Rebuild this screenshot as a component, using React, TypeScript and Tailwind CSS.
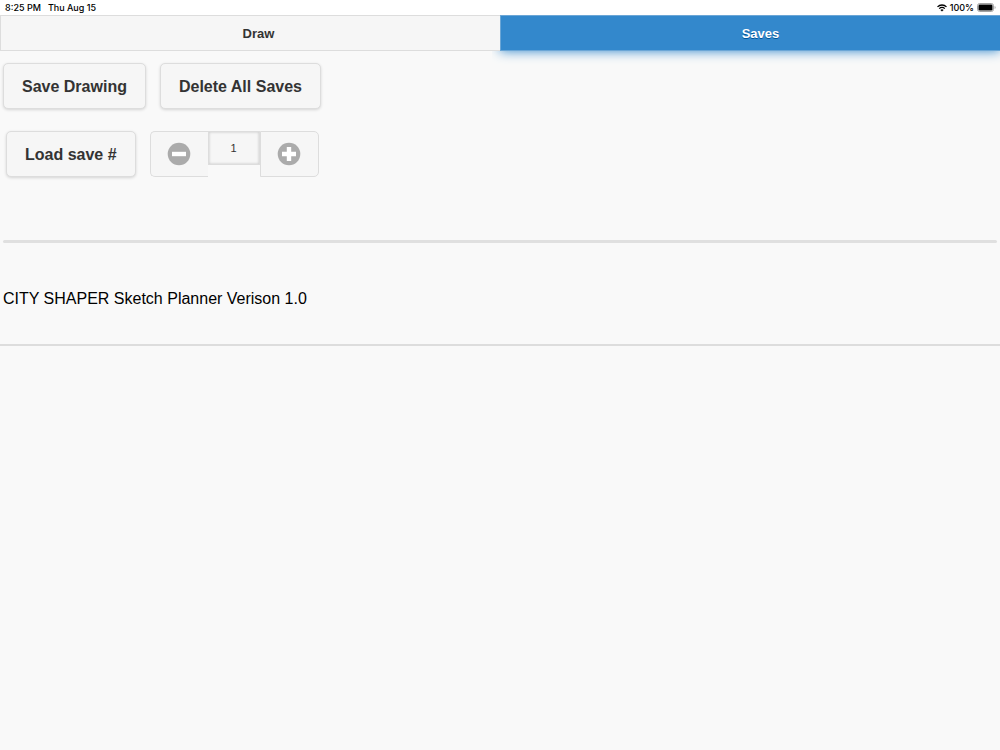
import { useState } from "react";
import type { ReactNode } from "react";

function WifiIcon() {
  return (
    <svg viewBox="0 0 20 15" className="h-2 w-2.5" aria-hidden="true">
      <g fill="none" stroke="#000" strokeWidth="2.6">
        <path d="M1 5.2a12.7 12.7 0 0 1 18 0" />
        <path d="M4.4 8.8a8 8 0 0 1 11.2 0" />
      </g>
      <path d="M10 14.6 6.8 11.3a4.6 4.6 0 0 1 6.4 0z" />
    </svg>
  );
}

function BatteryIcon() {
  return (
    <svg viewBox="0 0 19 9" className="h-[9px] w-[19px]" aria-hidden="true">
      <rect x="0.5" y="0.5" width="16" height="8" rx="2.2" fill="#fff" stroke="#a3a3a3" />
      <rect x="1.5" y="1.5" width="14" height="6" rx="1.2" />
      <path d="M17.6 3v3c.6-.2 1-.8 1-1.5s-.4-1.3-1-1.5z" fill="#a3a3a3" />
    </svg>
  );
}

function StatusBar() {
  return (
    <div className="flex h-[15px] items-center justify-between bg-white pl-[5px] pr-1 font-['Inter',sans-serif] text-[9px] font-medium text-black">
      <div className="flex gap-[7px]">
        <span>8:25 PM</span>
        <span>Thu Aug 15</span>
      </div>
      <div className="flex items-center gap-[3px]">
        <WifiIcon />
        <span>100%</span>
        <BatteryIcon />
      </div>
    </div>
  );
}

type Tab = "Draw" | "Saves";

function TabBar({ active, onChange }: { active: Tab; onChange: (tab: Tab) => void }) {
  const tabs: Tab[] = ["Draw", "Saves"];
  return (
    <nav className="flex h-9">
      {tabs.map((tab) => (
        <button
          key={tab}
          type="button"
          onClick={() => onChange(tab)}
          className={
            tab === active
              ? "w-1/2 border border-r-0 border-[#6ba6d6] bg-[#3388cc] pt-0.5 pl-5 text-[13px] font-bold text-white shadow-[0_0_12px_#3388cc] [clip-path:inset(0_0_-16px_-8px)] [text-shadow:0_1px_0_#005599]"
              : "relative z-10 w-1/2 border border-r-0 border-[#dddddd] bg-[#f6f6f6] pt-0.5 pl-4 text-[13px] font-bold text-[#333333] [text-shadow:0_1px_0_#f3f3f3]"
          }
        >
          {tab}
        </button>
      ))}
    </nav>
  );
}

function ActionButton({ children }: { children: ReactNode }) {
  return (
    <button
      type="button"
      className="h-[46px] rounded-[5px] border border-[#dddddd] bg-[#f6f6f6] px-[18px] pt-0.5 text-base font-bold text-[#333333] shadow-[0_1px_3px_rgba(0,0,0,0.15)] [text-shadow:0_1px_0_#f3f3f3]"
    >
      {children}
    </button>
  );
}

function SaveStepper() {
  const [slot, setSlot] = useState(1);
  return (
    <div className="flex items-start">
      <button
        type="button"
        aria-label="Previous save"
        onClick={() => setSlot(Math.max(1, slot - 1))}
        className="flex h-[46px] w-[58px] items-center justify-center rounded-l-[5px] border border-r-0 border-[#dddddd] bg-[#f6f6f6]"
      >
        <svg viewBox="0 0 24 24" className="size-6" aria-hidden="true">
          <circle cx="12" cy="12" r="11.3" fill="#ababab" />
          <path d="M5 12h14" stroke="#fff" strokeWidth="4.4" />
        </svg>
      </button>
      <input
        type="text"
        aria-label="Save number"
        value={slot}
        onChange={(e) => setSlot(Number(e.target.value) || 1)}
        className="h-[34px] w-[52px] border border-[#dddddd] bg-[#f6f6f6] text-center text-[11px] text-[#333333] shadow-[inset_0_0_3px_rgba(0,0,0,0.2)]"
      />
      <button
        type="button"
        aria-label="Next save"
        onClick={() => setSlot(slot + 1)}
        className="flex h-[46px] w-[59px] items-center justify-center rounded-r-[5px] border border-[#dddddd] bg-[#f6f6f6]"
      >
        <svg viewBox="0 0 24 24" className="size-6" aria-hidden="true">
          <circle cx="12" cy="12" r="11.3" fill="#ababab" />
          <path d="M5 12h14M12 5v14" stroke="#fff" strokeWidth="4.4" />
        </svg>
      </button>
    </div>
  );
}

function App() {
  const [tab, setTab] = useState<Tab>("Saves");

  return (
    <div className="min-h-screen bg-[#f9f9f9] font-['Liberation_Sans',Arial,sans-serif]">
      <StatusBar />
      <TabBar active={tab} onChange={setTab} />

      <main className="border-b-2 border-[#dddddd] px-[3px] pt-3">
        {/* Save actions */}
        <div className="flex gap-[14px]">
          <ActionButton>Save Drawing</ActionButton>
          <ActionButton>Delete All Saves</ActionButton>
        </div>

        {/* Load a save by number */}
        <div className="mt-[22px] flex gap-[14px] pl-[3px]">
          <ActionButton>Load save #</ActionButton>
          <SaveStepper />
        </div>

        <hr className="mt-[63px] h-[3px] rounded-full border-0 bg-[#e0e0e0]" />

        <p className="pt-11 pb-[33px] text-base text-black">CITY SHAPER Sketch Planner Verison 1.0</p>
      </main>
    </div>
  );
}

export default App;
